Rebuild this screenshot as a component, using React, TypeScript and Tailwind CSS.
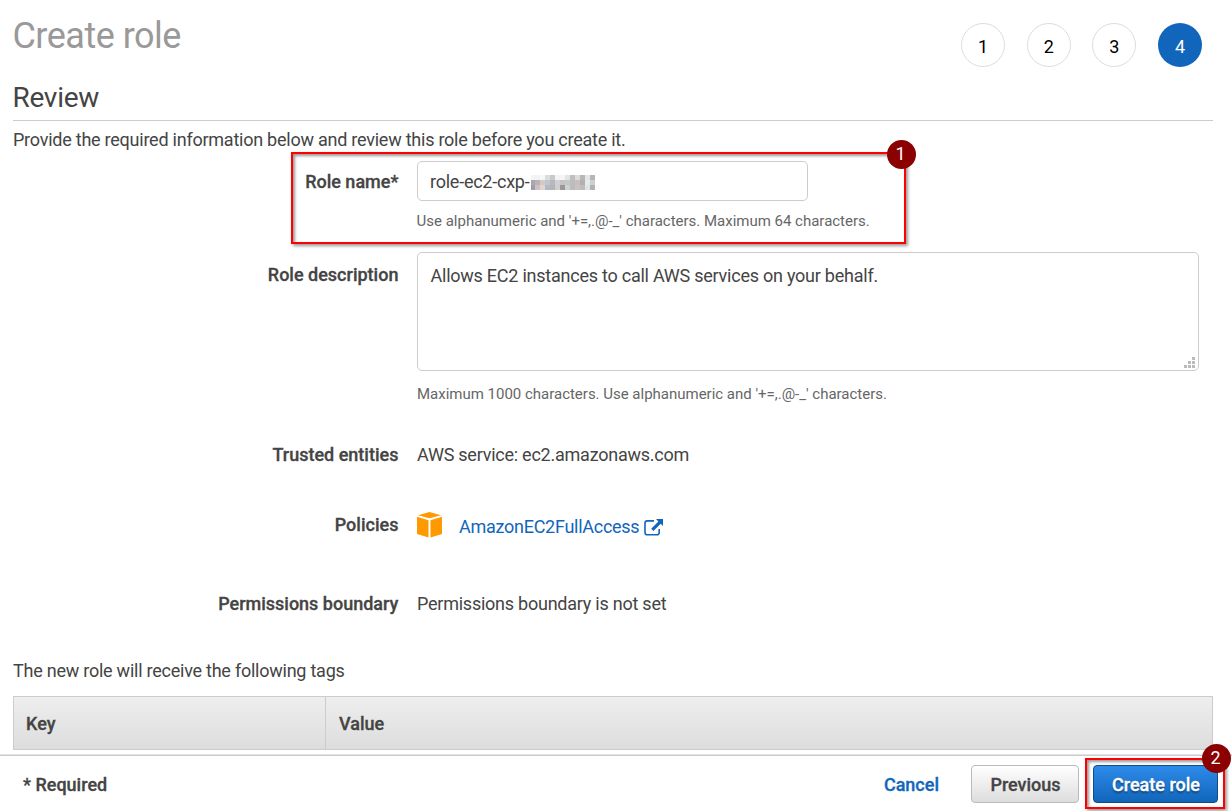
import React from "react";

const mosaic: string[][] = [
  ["#f4f4f2", "#f3f3f3", "#f7f7f7", "#dcdcdf", "#c9c9cc", "#f3f3f3", "#f5f5f5", "#e1e4e2", "#bfbfc1", "#dcdcdc", "#b9b6b8", "#e3e6e6", "#b8b5b8"],
  ["#aba9ad", "#b8b4b6", "#d2cac8", "#c3c6cf", "#b8b8bc", "#d0d0d3", "#c4c4c4", "#c3cac5", "#bcbdbd", "#c8c0be", "#b4b0b2", "#e6eaea", "#cfcfd3"],
  ["#a19fa5", "#c8c4c5", "#e6d3ca", "#b0bacc", "#b5b5b7", "#d0d0d1", "#9b9797", "#d0d2d1", "#bcbcb8", "#cbc2c0", "#bcbcc2", "#dfe4e5", "#b0b2b4"],
];

const rowTop = [0, 5, 10];

function Mosaic() {
  return (
    <svg width="64" height="15" viewBox="0 0 64 15" shapeRendering="crispEdges" className="shrink-0">
      {mosaic.map((row, y) =>
        row.map((c, x) => <rect key={`${x}-${y}`} x={x * 5 - 1} y={rowTop[y]} width="5" height="5" fill={c} />)
      )}
    </svg>
  );
}

function Badge({ children, className }: { children: React.ReactNode; className: string }) {
  return (
    <span className={`absolute flex size-[29.5px] items-center justify-center rounded-full bg-[#8b0000] pr-[2px] pb-px text-[18px] leading-none text-white ${className}`}>
      {children}
    </span>
  );
}

const strong = "font-medium tracking-[0px] [-webkit-text-stroke:0.3px_currentColor]";
const label = `w-[386px] shrink-0 pr-[0.6px] text-right ${strong}`;
const step = "flex size-[44px] items-center justify-center rounded-full border border-[#ddd] pt-[3px]";

export default function App() {
  return (
    <div className="relative flex h-[811px] w-[1232px] flex-col overflow-hidden bg-white font-['Roboto',sans-serif] text-[18px] leading-[24px] tracking-[-0.24px] text-[#444]">
      <main className="h-[754px] shrink-0 pr-[19px] pl-[13px]">
        <header className="flex h-[76px] items-start justify-between">
          <h1 className="-ml-[0.6px] pt-[15px] text-[36px] leading-[42px] tracking-[-0.5px] text-[#999]">Create role</h1>
          <div className="flex gap-[21.7px] pt-[23px] pr-[11px] text-black">
            <span className={step}>1</span>
            <span className={step}>2</span>
            <span className={step}>3</span>
            <span className="flex size-[44px] items-center justify-center rounded-full bg-[#1166bb] pt-[3px] text-white">4</span>
          </div>
        </header>
        <h2 className="h-[45px] border-b border-[#ccc] pt-[5px] text-[28px] leading-[34px]">
          <span className="-ml-[0.6px]">Review</span>
        </h2>
        <p className="h-[40px] pt-[7px]">Provide the required information below and review this role before you create it.</p>

        <section className="flex h-[91px]">
          <div className={`${label} pt-[9px]`}>Role name*</div>
          <div className="ml-[18px]">
            <div className="flex h-[40px] w-[391px] items-center rounded-[5px] border border-[#ccc] pt-[2px] pl-[12px]">
              <span className="w-[101px] whitespace-nowrap">role-ec2-cxp-</span>
              <Mosaic />
            </div>
            <p className="-ml-[0.4px] pt-[8px] text-[15px] tracking-[-0.01px] text-[#666]">Use alphanumeric and '+=,.@-_' characters. Maximum 64 characters.</p>
          </div>
        </section>

        <section className="flex h-[190px]">
          <div className={`${label} pt-[11px]`}>Role description</div>
          <div className="ml-[18px]">
            <div className="flex h-[119px] w-[782px] items-end justify-between rounded-[5px] border border-[#ccc] pr-[3px] pb-[2px] pl-[12.5px]">
              <span className="self-start pt-[11px]">Allows EC2 instances to call AWS services on your behalf.</span>
              <svg width="11" height="11" viewBox="0 0 11 11" fill="#bbb" shapeRendering="crispEdges">
                <path d="M8 0h3v3H8zM4 4h3v3H4zM8 4h3v3H8zM0 8h3v3H0zM4 8h3v3H4zM8 8h3v3H8z" />
              </svg>
            </div>
            <p className="pt-[11px] text-[15px] tracking-[-0.01px] text-[#666]">Maximum 1000 characters. Use alphanumeric and '+=,.@-_' characters.</p>
          </div>
        </section>

        <section className="flex h-[69px] pt-px">
          <div className={label}>Trusted entities</div>
          <div className="ml-[18px]">AWS service: ec2.amazonaws.com</div>
        </section>

        <section className="flex h-[80px]">
          <div className={`${label} pt-[2px]`}>Policies</div>
          <div className="ml-[18px] flex items-start">
            <svg width="25" height="26" viewBox="0 0 25 26" fill="#ff9900" className="mt-px">
              <path d="M12.5 0 24 3.2 12.5 6.3 1 3.2zM0 4.8l11.5 3.4V25.5L0 22zM25 4.8V22l-11.5 3.5V8.2z" />
            </svg>
            <a className="ml-[17px] w-[180px] pt-[4px] tracking-[-0.27px] whitespace-nowrap text-[#1166bb]">AmazonEC2FullAccess</a>
            <svg width="20" height="19" viewBox="0 0 20 19" className="mt-[8px] ml-[5px]">
              <path d="M10 1.9H3.3Q1 1.9 1 4.2v9.2q0 2.3 2.3 2.3h9.6q2.3 0 2.3-2.3V10" fill="none" stroke="#1166bb" strokeWidth="1.6" />
              <path d="M12 0h7v7l-2.3-2.3-7.3 7.3-2.2-2.2 7.2-7.4z" fill="#1166bb" />
            </svg>
          </div>
        </section>

        <section className="flex h-[67px] pt-px">
          <div className={label}>Permissions boundary</div>
          <div className="ml-[18px]">Permissions boundary is not set</div>
        </section>

        <p className="h-[38px] pt-px">The new role will receive the following tags</p>
        <div className={`flex h-[54px] items-center border border-[#ccc] bg-linear-to-b from-[#eee] to-[#ddd] ${strong}`}>
          <div className="flex h-full w-[312px] items-center border-r border-[#ccc] pt-[2px] pl-[12px]">Key</div>
          <div className="pt-[2px] pl-[13px]">Value</div>
        </div>
      </main>

      <footer className="flex h-[57px] shrink-0 items-center border-t border-[#e4e4e4] pt-px pr-[14px] pl-[23px] shadow-[inset_0_1px_0_#ccc]">
        <span className={`pt-[2px] ${strong}`}>* Required</span>
        <a className={`mr-[32px] ml-auto pt-[2px] text-[#1166bb] ${strong}`}>Cancel</a>
        <button className={`mr-[14px] h-[38px] w-[108px] rounded-[4px] border border-[#bbb] bg-linear-to-b from-white to-[#ddd] pt-[2px] pl-px ${strong}`}>Previous</button>
        <button className={`h-[38px] w-[125px] rounded-[4px] border border-[#124a83] bg-linear-to-b from-[#2d8bea] to-[#1166bb] pt-[2px] pl-px text-white [text-shadow:0_2px_2px_#0006] ${strong}`}>Create role</button>
      </footer>

      <div className="absolute top-[152px] left-[291px] h-[92px] w-[615px] border-2 border-[#f00] shadow-[2px_2px_3px_#0006,inset_2px_2px_3px_#0006]" />
      <Badge className="top-[139.5px] left-[886.7px]">1</Badge>
      <div className="absolute top-[758px] left-[1085px] h-[51px] w-[140px] border-2 border-[#f00] shadow-[2px_2px_3px_#0006,inset_2px_2px_3px_#0006]" />
      <Badge className="top-[743.7px] left-[1201.7px]">2</Badge>
    </div>
  );
}
